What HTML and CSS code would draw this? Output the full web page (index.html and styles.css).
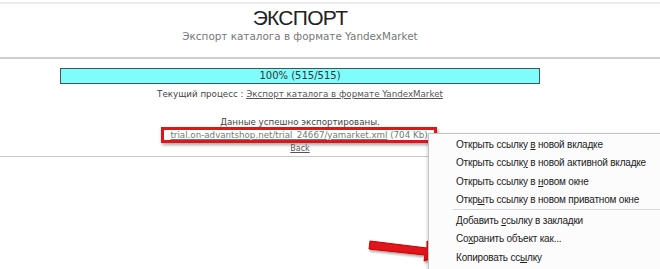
FILE: index.html
```html
<!DOCTYPE html>
<html lang="ru">
  <head>
    <meta charset="UTF-8" />
    <title>Экспорт</title>
    <link rel="stylesheet" href="styles.css">
  </head>
  <body>
    <header class="page-header">
      <h1>ЭКСПОРТ</h1>
      <div class="subtitle">Экспорт каталога в формате YandexMarket</div>
    </header>

    <main class="export-box">
      <div class="progress">
        <div class="progress-fill">100% (515/515)</div>
      </div>
      <div class="process">
        Текущий процесс : <a href="#">Экспорт каталога в формате YandexMarket</a>
      </div>
      <div class="result">
        <div>Данные успешно экспортированы.</div>
        <div><span class="highlight"><a href="#">trial.on-advantshop.net/trial_24667/yamarket.xml</a> (704 Kb)</span></div>
        <div><a href="#" class="back">Back</a></div>
      </div>
    </main>

    <svg class="arrow" width="90" height="30" viewBox="0 0 90 30">
      <defs>
        <filter id="sh" x="-20%" y="-40%" width="140%" height="180%">
          <feDropShadow dx="1" dy="2" stdDeviation="1.2" flood-color="#000" flood-opacity="0.35" />
        </filter>
      </defs>
      <g filter="url(#sh)">
        <path d="M3 5 L60 12 L60 5 L79 17 L57 25 L58 19 L2 13 Z" fill="#e0141b" stroke="#c00" stroke-width="1" stroke-linejoin="round" />
      </g>
    </svg>

    <ul class="context-menu">
      <li>Открыть ссылку <u>в</u> новой вкладке</li>
      <li>Открыть ссылк<u>у</u> в новой активной вкладке</li>
      <li>Открыть ссылку в <u>н</u>овом окне</li>
      <li>Откр<u>ы</u>ть ссылку в новом приватном окне</li>
      <li class="sep"></li>
      <li>Добавить <u>с</u>сылку в закладки</li>
      <li>Со<u>х</u>ранить объект как...</li>
      <li>Копировать сс<u>ы</u>лку</li>
    </ul>
  </body>
</html>
```

FILE: styles.css
```css
* {
  margin: 0;
  padding: 0;
  box-sizing: border-box;
}

body {
  width: 660px;
  height: 269px;
  overflow: hidden;
  background: #fff;
  font-family: "DejaVu Sans", sans-serif;
  color: #444;
  position: relative;
}

.page-header {
  border-top: 2px solid #ececec;
  margin-top: 2px;
  height: 57px;
  border-bottom: 2px solid #cfcfcf;
  padding-top: 1px;
}

.page-header h1,
.subtitle {
  width: 600px;
  text-align: center;
}

.page-header h1 {
  font-family: "Liberation Sans", Arial, sans-serif;
  font-weight: normal;
  font-size: 21px;
  line-height: 25px;
  letter-spacing: -0.7px;
  color: #222;
}

.subtitle {
  font-size: 10.4px;
  line-height: 13px;
  color: #777;
}

.export-box {
  width: 600px;
  height: 98px;
  border-bottom: 1px solid #c8c8c8;
  padding-top: 9px;
  text-align: center;
  font-size: 8.7px;
}

.progress {
  margin: 0 60px;
  height: 16px;
  border: 1px solid #3c5a5c;
  background: #7ffdfd;
}

.progress-fill {
  line-height: 14px;
  font-size: 10px;
  color: #333;
}

.process {
  margin-top: 4px;
  line-height: 12px;
}

.process a,
.result a {
  color: #555;
}

.result {
  margin-top: 17px;
  line-height: 10px;
}

.highlight {
  display: inline-block;
  border: 3px solid #e0141b;
  box-shadow: 1px 2px 3px rgba(0, 0, 0, 0.35);
  padding: 0 6px;
  line-height: 10px;
  margin-left: -2px;
  color: #777;
}

.highlight a {
  color: #777;
}

.back {
  font-size: 8px;
}

.arrow {
  position: absolute;
  left: 367px;
  top: 236px;
}

.context-menu {
  position: absolute;
  left: 428px;
  top: 133px;
  width: 240px;
  height: 140px;
  list-style: none;
  background: #fcfcfc;
  border: 1px solid #c4c4c4;
  box-shadow: -1px 1px 3px rgba(0, 0, 0, 0.15);
  padding-top: 2px;
  font-family: "Liberation Sans", sans-serif;
  font-size: 10px;
  letter-spacing: -0.2px;
  color: #222;
}

.context-menu li {
  height: 18.3px;
  line-height: 18px;
  padding-left: 27px;
  white-space: nowrap;
}

.context-menu li.sep {
  height: 3px;
  margin: 0 0 0 24px;
  padding: 0;
  border-top: 1px solid #d8d8d8;
}
```
